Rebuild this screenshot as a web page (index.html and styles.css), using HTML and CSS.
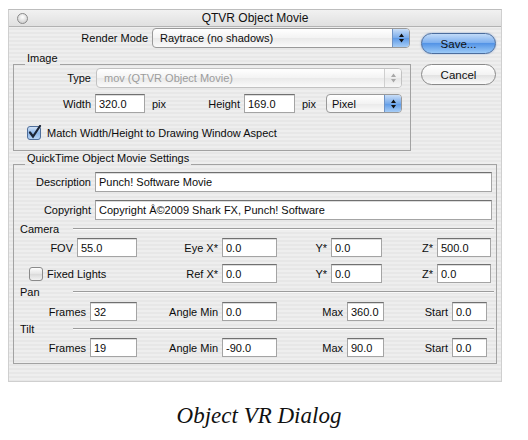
FILE: index.html
```html
<!DOCTYPE html>
<html lang="en">
<head>
  <meta charset="UTF-8" />
  <title>QTVR Object Movie</title>
  <link rel="stylesheet" href="styles.css">
</head>
<body>

  <div class="shot">
    <div class="window">

      <!-- Title bar -->
      <div class="titlebar">
        <span class="close"></span>
        <span class="title">QTVR Object Movie</span>
      </div>

      <div class="content">
        <div class="top">
          <div class="left">
            <div class="row">
              <span class="lbl render-lbl">Render Mode</span>
              <div class="popup render-popup">
                <span>Raytrace (no shadows)</span>
                <span class="stepper"><svg width="7" height="12" viewBox="0 0 7 12"><path d="M3.5 1.5 L6 5 H1Z M3.5 10.5 L6 7 H1Z" fill="#111"/></svg></span>
              </div>
            </div>

            <!-- Image group -->
            <div class="group image-group">
              <div class="group-title"><span>Image</span></div>
              <div class="group-box">
                <div class="row">
                  <span class="lbl col-lbl">Type</span>
                  <div class="popup type-popup disabled">
                    <span>mov (QTVR Object Movie)</span>
                    <span class="stepper"><svg width="7" height="12" viewBox="0 0 7 12"><path d="M3.5 1.5 L6 5 H1Z M3.5 10.5 L6 7 H1Z" fill="#a8a8a8"/></svg></span>
                  </div>
                </div>
                <div class="row size-row">
                  <span class="lbl col-lbl">Width</span>
                  <input class="field w50" type="text" value="320.0">
                  <span class="unit">pix</span>
                  <span class="lbl height-lbl">Height</span>
                  <input class="field w51" type="text" value="169.0">
                  <span class="unit">pix</span>
                  <div class="popup unit-popup">
                    <span>Pixel</span>
                    <span class="stepper"><svg width="7" height="12" viewBox="0 0 7 12"><path d="M3.5 1.5 L6 5 H1Z M3.5 10.5 L6 7 H1Z" fill="#111"/></svg></span>
                  </div>
                </div>
                <div class="row check-row">
                  <span class="check on"><svg width="15" height="15" viewBox="0 0 15 15">
                    <defs>
                      <linearGradient id="cb" x1="0" y1="0" x2="0" y2="1">
                        <stop offset="0" stop-color="#d7e6f8"/>
                        <stop offset="0.5" stop-color="#8db6e8"/>
                        <stop offset="1" stop-color="#b9d5f5"/>
                      </linearGradient>
                    </defs>
                    <rect x="0.5" y="1.5" width="13" height="13" rx="2.5" fill="url(#cb)" stroke="#4f6e9a"/>
                    <path d="M3 7.5 L6 11.5 L13 1" fill="none" stroke="#1c2536" stroke-width="2.2" stroke-linecap="round"/>
                  </svg></span>
                  <span>Match Width/Height to Drawing Window Aspect</span>
                </div>
              </div>
            </div>
          </div>

          <div class="buttons">
            <button class="btn default">Save...</button>
            <button class="btn">Cancel</button>
          </div>
        </div>

        <!-- QuickTime settings group -->
        <div class="group qt-group">
          <div class="group-title"><span>QuickTime Object Movie Settings</span></div>
          <div class="group-box qt-box">
            <div class="row text-row">
              <span class="lbl col-lbl">Description</span>
              <input class="field long" type="text" value="Punch! Software Movie">
            </div>
            <div class="row text-row copy-row">
              <span class="lbl col-lbl">Copyright</span>
              <input class="field long" type="text" value="Copyright Â©2009 Shark FX, Punch! Software">
            </div>

            <div class="section"><span class="sec-lbl">Camera</span><span class="rule"></span></div>
            <div class="grid-row first">
              <div class="cell"><span>FOV</span><input class="field w60" type="text" value="55.0"></div>
              <div class="cell"><span>Eye X*</span><input class="field w55" type="text" value="0.0"></div>
              <div class="cell"><span>Y*</span><input class="field w51 mr2" type="text" value="0.0"></div>
              <div class="cell"><span>Z*</span><input class="field w54" type="text" value="500.0"></div>
            </div>
            <div class="grid-row second">
              <div class="cell lights">
                <span class="check off"></span>
                <span>Fixed Lights</span>
              </div>
              <div class="cell"><span>Ref X*</span><input class="field w55" type="text" value="0.0"></div>
              <div class="cell"><span>Y*</span><input class="field w51 mr2" type="text" value="0.0"></div>
              <div class="cell"><span>Z*</span><input class="field w54" type="text" value="0.0"></div>
            </div>

            <div class="section pan"><span class="sec-lbl">Pan</span><span class="rule"></span></div>
            <div class="grid-row frames">
              <div class="cell"><span>Frames</span><input class="field w47" type="text" value="32"></div>
              <div class="cell"><span>Angle Min</span><input class="field w55" type="text" value="0.0"></div>
              <div class="cell"><span>Max</span><input class="field w37" type="text" value="360.0"></div>
              <div class="cell"><span>Start</span><input class="field w35 mr4" type="text" value="0.0"></div>
            </div>

            <div class="section tilt"><span class="sec-lbl">Tilt</span><span class="rule"></span></div>
            <div class="grid-row frames tilt-row">
              <div class="cell"><span>Frames</span><input class="field w47" type="text" value="19"></div>
              <div class="cell"><span>Angle Min</span><input class="field w55" type="text" value="-90.0"></div>
              <div class="cell"><span>Max</span><input class="field w37" type="text" value="90.0"></div>
              <div class="cell"><span>Start</span><input class="field w35 mr4" type="text" value="0.0"></div>
            </div>
          </div>
        </div>
      </div>
    </div>

    <p class="caption">Object VR Dialog</p>
  </div>

</body>
</html>
```

FILE: styles.css
```css
* {
  box-sizing: border-box;
  margin: 0;
  padding: 0;
}

body {
  background: #fff;
  font-family: "Liberation Sans", Arial, sans-serif;
  font-size: 11px;
  color: #0c0c0c;
}

.shot {
  padding: 9px 0 0 8px;
}

/* Window frame */
.window {
  width: 494px;
  height: 373px;
  border: 1px solid #cfcfcf;
  border-top-color: #bdbdbd;
  background: repeating-linear-gradient(#eeeeee 0 2px, #e7e7e7 2px 4px);
}

.titlebar {
  height: 17px;
  display: flex;
  align-items: center;
  border-bottom: 1px solid #b2b2b2;
  background: linear-gradient(#f1f1f1, #e0e0e0);
}

.close {
  width: 11px;
  height: 11px;
  margin-left: 8px;
  border-radius: 50%;
  border: 1px solid #8a8a8a;
  background: radial-gradient(circle at 50% 35%, #fff, #c4c4c4);
}

.title {
  flex: 1;
  text-align: center;
  padding-right: 19px;
  font-size: 12px;
  color: #111;
}

.content {
  padding: 1px 0 0 4px;
}

.top {
  display: flex;
  gap: 10px;
}

.left {
  width: 398px;
}

.row {
  display: flex;
  align-items: center;
  gap: 4px;
  height: 20px;
}

.lbl {
  text-align: right;
  flex-shrink: 0;
}

.render-lbl {
  width: 135px;
}

.col-lbl {
  width: 77px;
}

/* Aqua popup menus */
.popup {
  display: flex;
  align-items: center;
  justify-content: space-between;
  height: 20px;
  padding-left: 7px;
  border: 1px solid #999;
  border-radius: 4px;
  background: linear-gradient(#fff, #f3f3f3 50%, #e9e9e9 50%, #fafafa);
  overflow: hidden;
}

.render-popup {
  width: 258px;
}

.type-popup {
  width: 306px;
  margin-left: 1px;
}

.unit-popup {
  width: 76px;
  height: 19px;
  padding-left: 5px;
}

.stepper {
  display: flex;
  align-items: center;
  justify-content: center;
  width: 17px;
  height: 100%;
  border-left: 1px solid #6f93c4;
  background: linear-gradient(#c9def8, #77aaea 50%, #5b98e6 50%, #a7cdf6);
}

.popup.disabled {
  color: #9c9c9c;
  border-color: #c2c2c2;
}

.popup.disabled .stepper {
  border-left-color: #cfcfcf;
  background: linear-gradient(#fbfbfb, #efefef 50%, #e6e6e6 50%, #f7f7f7);
}

/* Group boxes */
.group-title {
  display: flex;
  height: 13px;
  line-height: 13px;
}

.group-title::before {
  content: "";
  width: 12px;
  border-bottom: 1px solid #a2a2a2;
}

.group-title::after {
  content: "";
  flex: 1;
  border-bottom: 1px solid #a2a2a2;
}

.group-title span {
  padding: 0 2px;
}

.group-box {
  border: 1px solid #a2a2a2;
  border-top: none;
}

.image-group {
  margin-top: 4px;
}

.image-group .group-box {
  padding: 3px 0 10px;
}

.size-row {
  margin-top: 6px;
  height: 19px;
}

.unit {
  width: 23px;
  padding-left: 3px;
}

.height-lbl {
  width: 64px;
}

.check-row {
  margin-top: 13px;
  height: 14px;
  gap: 6px;
  padding-left: 13px;
}

.check {
  display: block;
  width: 14px;
  height: 14px;
}

.check svg {
  display: block;
  margin-top: -1px;
}

.check.off {
  border: 1px solid #8a8a8a;
  border-radius: 3px;
  background: linear-gradient(#fdfdfd, #e4e4e4 50%, #d9d9d9 50%, #f2f2f2);
}

/* Text fields */
.field {
  height: 19px;
  padding: 0 3px;
  border: 1px solid #a4a4a4;
  border-top-color: #707070;
  background: #fff;
  font: inherit;
  color: #0c0c0c;
  outline: none;
  box-shadow: inset 0 1px 0 #dcdcdc;
}

.w35 { width: 35px; }
.w37 { width: 37px; }
.w47 { width: 47px; }
.w50 { width: 50px; }
.w51 { width: 51px; }
.w54 { width: 54px; }
.w55 { width: 55px; }
.w60 { width: 60px; }
.mr2 { margin-right: 2px; }
.mr4 { margin-right: 4px; }

/* Buttons */
.buttons {
  display: flex;
  flex-direction: column;
  gap: 10px;
  padding-top: 5px;
}

.btn {
  width: 75px;
  height: 21px;
  border-radius: 11px;
  border: 1px solid #8a8a8a;
  background: linear-gradient(#fff, #f3f3f3 50%, #e0e0e0 50%, #fbfbfb);
  font: inherit;
  font-size: 11.5px;
  color: #111;
}

.btn.default {
  border-color: #4b6d9e;
  background: linear-gradient(#c2dbf8, #78acee 50%, #5494e6 50%, #9ccaf7);
  box-shadow: 0 0 2px rgba(60, 110, 190, 0.5);
}

/* QuickTime settings */
.qt-group {
  margin-top: 1px;
  width: 484px;
}

.qt-box {
  padding: 7px 0 6px;
}

.long {
  width: 397px;
  height: 20px;
}

.copy-row {
  margin-top: 8px;
}

.section {
  display: flex;
  align-items: center;
  height: 14px;
  margin-top: 2px;
}

.sec-lbl {
  width: 59px;
  padding-left: 6px;
}

.rule {
  flex: 1;
  height: 2px;
  margin-right: 2px;
  border-top: 1px solid #9c9c9c;
  border-bottom: 1px solid #fafafa;
}

.grid-row {
  display: grid;
  grid-template-columns: 123px 140px 107px 107px;
  height: 19px;
}

.cell {
  display: flex;
  justify-content: flex-end;
  align-items: center;
  gap: 4px;
}

.grid-row.first {
  margin-top: 2px;
}

.grid-row.second {
  margin-top: 7px;
}

.cell.lights {
  justify-content: flex-start;
  padding-left: 15px;
}

.grid-row.frames {
  margin-top: 3px;
}

.section.tilt {
  margin-top: 1px;
}

.grid-row.tilt-row {
  margin-top: 2px;
}

.caption {
  margin-top: 21px;
  padding-right: 18px;
  text-align: center;
  font-family: "Liberation Serif", "Times New Roman", serif;
  font-style: italic;
  font-size: 23px;
  line-height: 26px;
  color: #111;
}
```
